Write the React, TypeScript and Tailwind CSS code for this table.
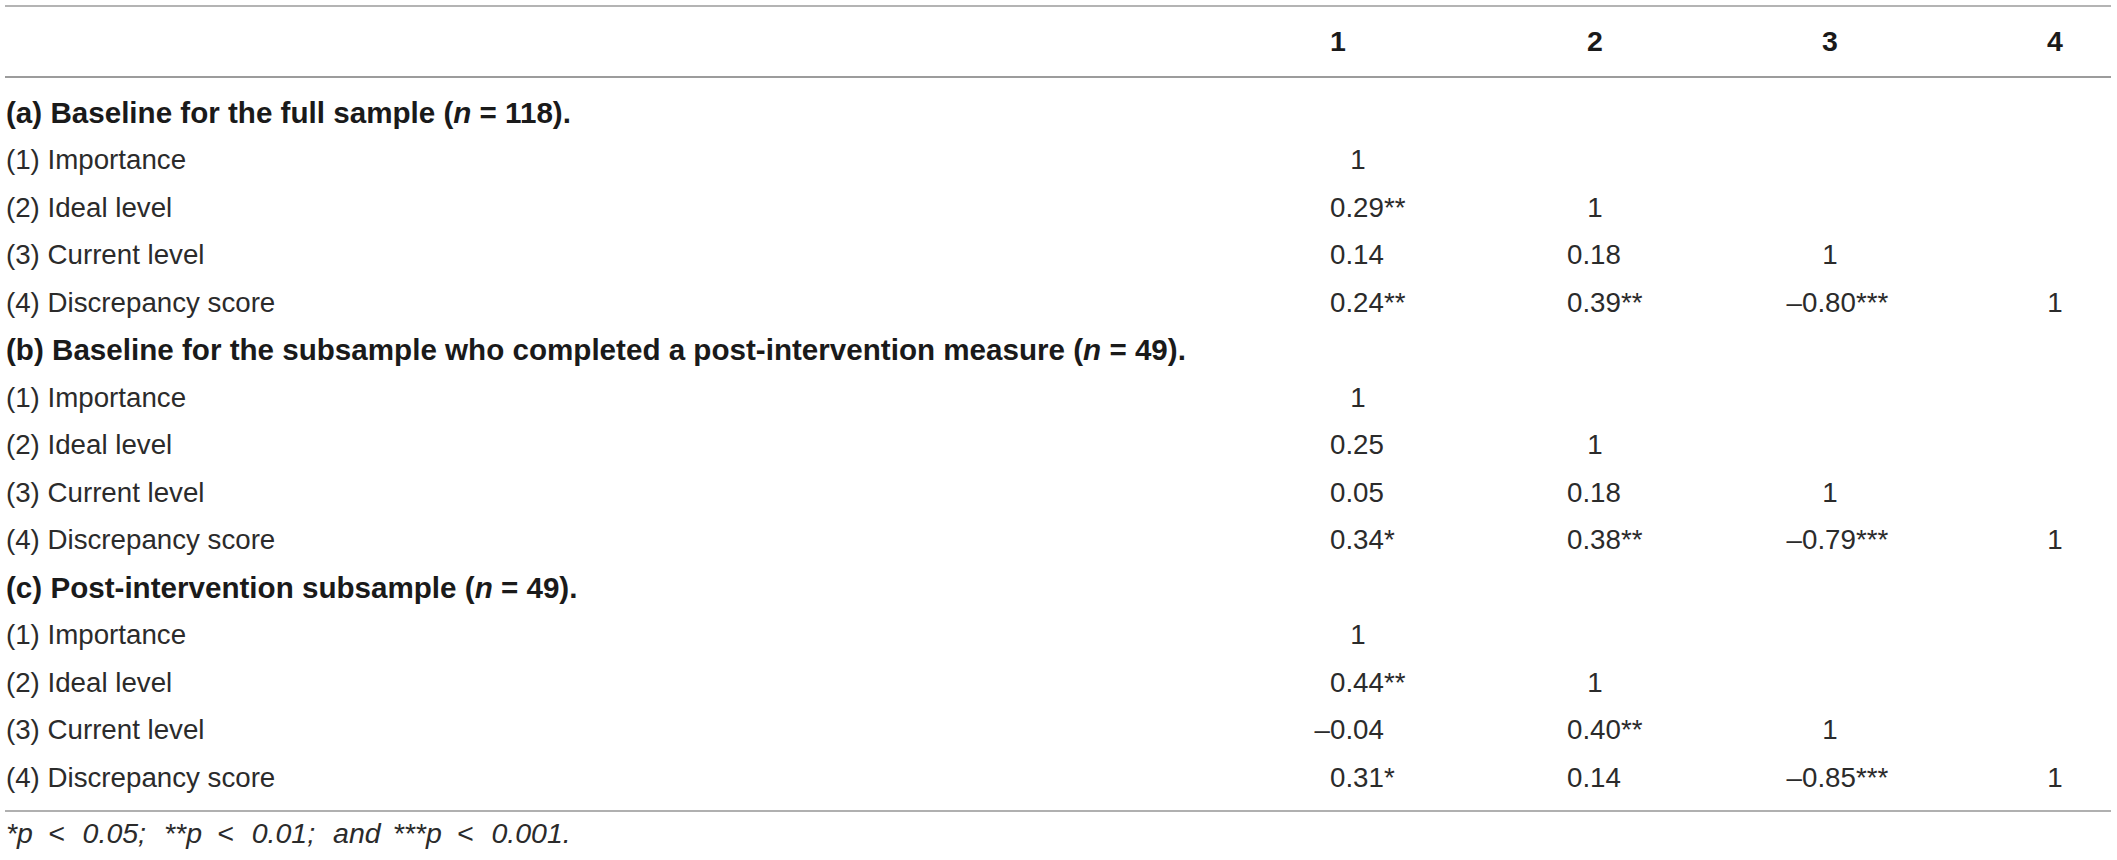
import React from 'react';

type Cell = string | null;

type Row = { label: string; cells: Cell[] };

type Section = { title: React.ReactNode; rows: Row[] };

const SECTIONS: Section[] = [
  {
    title: (
      <>
        (a) Baseline for the full sample (<i>n</i> = 118).
      </>
    ),
    rows: [
      { label: '(1) Importance', cells: ['1', null, null, null] },
      { label: '(2) Ideal level', cells: ['0.29**', '1', null, null] },
      { label: '(3) Current level', cells: ['0.14', '0.18', '1', null] },
      { label: '(4) Discrepancy score', cells: ['0.24**', '0.39**', '–0.80***', '1'] },
    ],
  },
  {
    title: (
      <>
        (b) Baseline for the subsample who completed a post-intervention measure (<i>n</i> = 49).
      </>
    ),
    rows: [
      { label: '(1) Importance', cells: ['1', null, null, null] },
      { label: '(2) Ideal level', cells: ['0.25', '1', null, null] },
      { label: '(3) Current level', cells: ['0.05', '0.18', '1', null] },
      { label: '(4) Discrepancy score', cells: ['0.34*', '0.38**', '–0.79***', '1'] },
    ],
  },
  {
    title: (
      <>
        (c) Post-intervention subsample (<i>n</i> = 49).
      </>
    ),
    rows: [
      { label: '(1) Importance', cells: ['1', null, null, null] },
      { label: '(2) Ideal level', cells: ['0.44**', '1', null, null] },
      { label: '(3) Current level', cells: ['–0.04', '0.40**', '1', null] },
      { label: '(4) Discrepancy score', cells: ['0.31*', '0.14', '–0.85***', '1'] },
    ],
  },
];

// widths of the four number columns, label column takes the rest up to x=1330
const COL_W = ['w-[237px]', 'w-[235px]', 'w-[225px]', 'flex-1'];

const Value: React.FC<{ v: Cell }> = ({ v }) => {
  if (!v) return null;
  if (v === '1') {
    return <span className="inline-block w-[56px] text-center">1</span>;
  }
  if (v.startsWith('–')) {
    return (
      <span>
        <span className="inline-block w-[18px] -ml-[18px] text-right">–</span>
        {v.slice(1)}
      </span>
    );
  }
  return <span>{v}</span>;
};

export default function App() {
  return (
    <div
      className="w-[2117px] h-[860px] bg-white text-[#2b2b2b] pt-[5px] pl-[5px] pr-[6px]"
      style={{ fontFamily: '"Liberation Sans", Arial, sans-serif' }}
    >
      <div className="h-[2px] bg-[#b4b4b4]" />

      {/* header */}
      <div className="h-[69px] flex items-center text-[28.5px] font-bold text-[#1a1a1a]">
        <div className="w-[1325px]" />
        <div className={COL_W[0]}>
          <span className="inline-block w-[15px] text-center">1</span>
        </div>
        <div className={COL_W[1]}>
          <span className="inline-block w-[56px] text-center">2</span>
        </div>
        <div className={COL_W[2]}>
          <span className="inline-block w-[56px] text-center">3</span>
        </div>
        <div className={COL_W[3]}>
          <span className="inline-block w-[56px] text-center">4</span>
        </div>
      </div>
      <div className="h-[2px] bg-[#9c9c9c]" />

      <div className="pt-[11px] pb-[8px]">
        {SECTIONS.map((s, si) => (
          <React.Fragment key={si}>
            <div className="h-[47.5px] flex items-center pl-[1px] text-[29.6px] font-bold text-[#1a1a1a] whitespace-nowrap">
              <span>{s.title}</span>
            </div>
            {s.rows.map((r, ri) => (
              <div key={ri} className="h-[47.5px] flex items-center text-[27.7px] whitespace-nowrap">
                <div className="w-[1325px] pl-[1px]">{r.label}</div>
                {r.cells.map((c, ci) => (
                  <div key={ci} className={COL_W[ci]}>
                    <Value v={c} />
                  </div>
                ))}
              </div>
            ))}
          </React.Fragment>
        ))}
      </div>

      <div className="h-[2px] bg-[#b0b0b0]" />
      {/* footnote, wide math spacing around "<" */}
      <div className="h-[44px] flex items-center pl-[1px] text-[28.5px] italic whitespace-nowrap">
        <span>*p</span>
        <span className="ml-[15px]">&lt;</span>
        <span className="ml-[18px]">0.05;</span>
        <span className="ml-[18px]">**p</span>
        <span className="ml-[15px]">&lt;</span>
        <span className="ml-[18px]">0.01;</span>
        <span className="ml-[18px]">and</span>
        <span className="ml-[12px]">***p</span>
        <span className="ml-[15px]">&lt;</span>
        <span className="ml-[18px]">0.001.</span>
      </div>
    </div>
  );
}
